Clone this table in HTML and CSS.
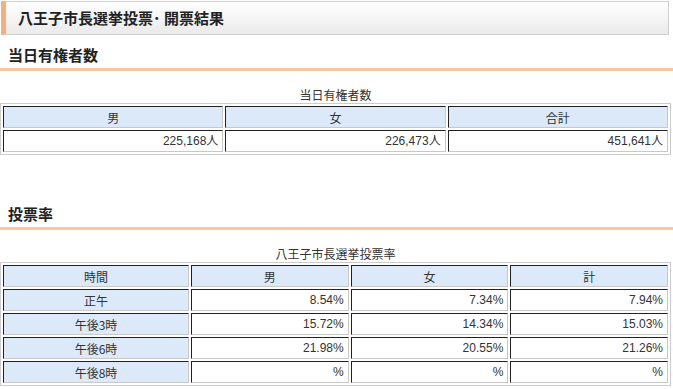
FILE: index.html
```html
<!DOCTYPE html>
<html lang="ja">
<head>
<meta charset="utf-8">
<title>八王子市長選挙投票・開票結果</title>
<link rel="stylesheet" href="styles.css">
</head>
<body>
<div class="page">
  <h1 class="title">八王子市長選挙投票･ 開票結果</h1>

  <h2 class="section">当日有権者数</h2>
  <table class="data three">
    <caption>当日有権者数</caption>
    <tr><th>男</th><th>女</th><th>合計</th></tr>
    <tr><td class="num">225,168人</td><td class="num">226,473人</td><td class="num">451,641人</td></tr>
  </table>

  <h2 class="section second">投票率</h2>
  <table class="data four">
    <caption>八王子市長選挙投票率</caption>
    <tr><th class="c1">時間</th><th>男</th><th>女</th><th>計</th></tr>
    <tr><th>正午</th><td class="num">8.54%</td><td class="num">7.34%</td><td class="num">7.94%</td></tr>
    <tr><th>午後3時</th><td class="num">15.72%</td><td class="num">14.34%</td><td class="num">15.03%</td></tr>
    <tr><th>午後6時</th><td class="num">21.98%</td><td class="num">20.55%</td><td class="num">21.26%</td></tr>
    <tr><th>午後8時</th><td class="num">%</td><td class="num">%</td><td class="num">%</td></tr>
  </table>
</div>
</body>
</html>
```
FILE: styles.css
```css
html, body {
  margin: 0;
  padding: 0;
  background: #fff;
}
body {
  font-family: "Liberation Sans", "Noto Sans CJK JP", sans-serif;
  color: #333;
  font-size: 12px;
}
.page {
  width: 673px;
  padding-top: 1px;
}
.title {
  margin: 0 4px 0 1px;
  height: 32px;
  box-sizing: content-box;
  border: 1px solid #cfcfcf;
  border-left: 5px solid #f6ae7e;
  background: linear-gradient(#ffffff, #eaeaea);
  padding-left: 12px;
  font-family: "Noto Sans CJK JP", sans-serif;
  font-size: 15px;
  font-weight: bold;
  line-height: 31px;
  color: #222;
}
.section {
  margin: 9px 0 0 0;
  padding: 0 0 0 8px;
  height: 24px;
  line-height: 22px;
  border-bottom: 3px solid #f9c6a2;
  font-family: "Noto Sans CJK JP", sans-serif;
  font-size: 15px;
  font-weight: bold;
  color: #222;
}
.section.second {
  margin-top: 48px;
}
.data {
  width: 671px;
  border: 1px solid #cccccc;
  border-spacing: 2px;
  table-layout: fixed;
  margin: 16px 0 0 0;
}
.data caption {
  height: 16px;
  line-height: 16px;
  font-family: "Noto Sans CJK JP", sans-serif;
  font-size: 12px;
  color: #333;
  text-align: center;
}
.data th, .data td {
  height: 20px;
  padding: 0 4px;
  line-height: 19px;
  border-top: 1px solid #222;
  border-left: 1px solid #222;
  border-right: 1px solid #c8c8c8;
  border-bottom: 1px solid #c8c8c8;
  font-weight: normal;
  font-size: 12px;
  color: #333;
  text-align: center;
}
.data th {
  background: #dce9f9;
  font-family: "Noto Sans CJK JP", sans-serif;
}
.data td.num {
  text-align: right;
  background: #fff;
}
.four .c1 {
  width: 176px;
}
```
